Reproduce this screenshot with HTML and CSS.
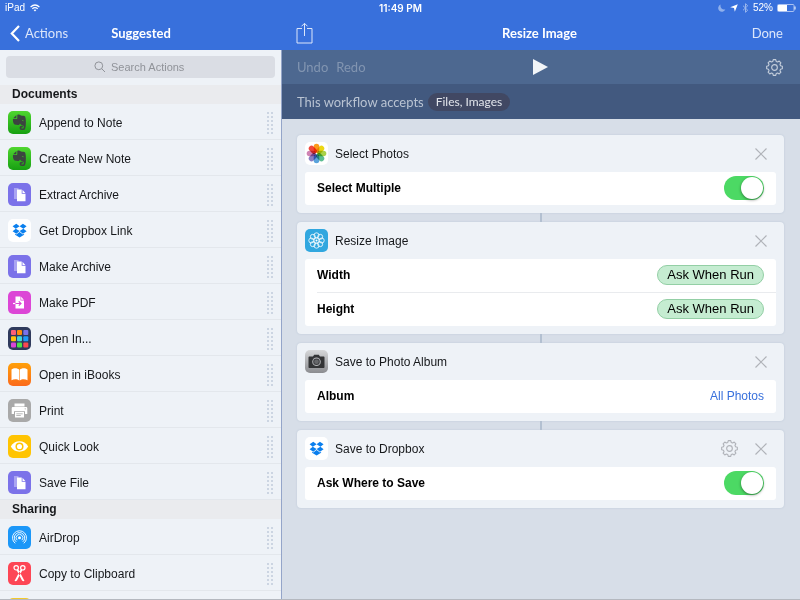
FILE: index.html
```html
<!DOCTYPE html>
<html lang="en">
<head>
<meta charset="utf-8">
<meta name="viewport" content="width=device-width, initial-scale=1">
<title>Resize Image</title>
<link rel="stylesheet" href="styles.css">
</head>
<body>
<svg class="sprite" aria-hidden="true">
  <defs>
    <linearGradient id="g-green" x1="0" y1="0" x2="0" y2="1"><stop offset="0" stop-color="#4fd62f"/><stop offset="1" stop-color="#17a012"/></linearGradient>
    <linearGradient id="g-orange" x1="0" y1="0" x2="0" y2="1"><stop offset="0" stop-color="#ffa009"/><stop offset="1" stop-color="#fb6a1c"/></linearGradient>
    <linearGradient id="g-gray" x1="0" y1="0" x2="0" y2="1"><stop offset="0" stop-color="#d6d7d9"/><stop offset="1" stop-color="#8b8c90"/></linearGradient>
  </defs>
  <symbol id="evernote" viewBox="0 0 23 23">
    <rect width="23" height="23" rx="5" fill="url(#g-green)"/>
    <path d="M5.200 7.200 8.400 4v2.400c0 .5-.3.8-.8.8z" fill="#3c4440"/>
    <path d="M5 8h3.300c.6 0 1-.4 1-1V3.900c.5-.5 2.600-.6 3.600.5 1.500.2 3.600.3 4.200 1 .7 1.400 1 5.300.7 8.500-.2 2.600-.7 5.100-2.300 5.100h-1.700c-1.400 0-2.200-.8-2.200-2.200 0-1.300.9-2 2.200-2h1v1.400h-.7c-.6 0-.8.3-.8.7 0 .5.3.7.8.7h.9c.6 0 .8-1 .8-2.200-.2-1-.9-1.200-2.300-1.500-.8-.2-1.300-.6-1.500-1.300-.2.9-.8 1.500-2 1.500-3.200 0-4.300-.7-4.700-2.500C5 10.500 4.800 9 5 8z" fill="#3c4440"/>
    <path d="M13.800 10c.2-1.200 1.800-1.100 2 .3-.7-.3-1.300-.3-2-.3z" fill="#45c128"/>
  </symbol>
  <symbol id="files" viewBox="0 0 23 23">
    <rect width="23" height="23" rx="5" fill="#7b72e9"/>
    <path d="M6 5h4.500v11H6z" fill="#aaa4f2"/>
    <path d="M9 6.500h4.700V10.800H17.500v7.500H9z" fill="#fff"/>
    <path d="M14.500 6.800 17.300 10h-2.800z" fill="#fff"/>
  </symbol>
  <symbol id="dropbox" viewBox="0 0 23 23">
    <rect width="23" height="23" rx="5" fill="#fff"/>
    <path d="M8.300 4.700 11.600 7.300 7.800 9.700 4.600 7.200zM14.900 4.700 18.600 7.200 15.400 9.700 11.600 7.300zM4.600 12.200 7.800 9.700 11.600 12.100 8.300 14.700zM18.600 12.200 15.400 9.700 11.600 12.100 14.900 14.700zM11.600 12.900 14.900 15.500 16.100 14.800V15.700L11.600 18.400 7.100 15.700V14.800L8.300 15.500z" fill="#0a7fee"/>
  </symbol>
  <symbol id="pdf" viewBox="0 0 23 23">
    <rect width="23" height="23" rx="5" fill="#dc46d6"/>
    <path d="M7.500 5.500h5v4H16V17.500H7.500z" fill="#fff"/>
    <path d="M13.200 5.700 15.800 8.700h-2.600z" fill="#fff"/>
    <path d="M5 12.500h2.500" stroke="#fff" stroke-width="1.200"/>
    <path d="M7.500 12.500h5M10.800 10.300 13 12.500l-2.200 2.200" fill="none" stroke="#dc46d6" stroke-width="1.200"/>
  </symbol>
  <symbol id="grid" viewBox="0 0 23 23">
    <rect width="23" height="23" rx="5" fill="#2f3a5c"/>
    <g><rect x="3" y="3" width="5" height="5" rx="1" fill="#fb5f78"/><rect x="9" y="3" width="5" height="5" rx="1" fill="#ff8a08"/><rect x="15.300" y="3" width="5" height="5" rx="1" fill="#7b72e9"/>
    <rect x="3" y="9.300" width="5" height="5" rx="1" fill="#ffc20a"/><rect x="9" y="9.300" width="5" height="5" rx="1" fill="#45d5d8"/><rect x="15.300" y="9.300" width="5" height="5" rx="1" fill="#1d9bfa"/>
    <rect x="3" y="15.500" width="5" height="5" rx="1" fill="#dc46d6"/><rect x="9" y="15.500" width="5" height="5" rx="1" fill="#4be14a"/><rect x="15.300" y="15.500" width="5" height="5" rx="1" fill="#fd4650"/></g>
  </symbol>
  <symbol id="books" viewBox="0 0 23 23">
    <rect width="23" height="23" rx="5" fill="url(#g-orange)"/>
    <path d="M3.500 6.500C5.500 4.700 9.500 4.700 11.200 6.700V17.500C9.500 15.800 5.800 15.700 3.500 17.300zM19.500 6.500C17.500 4.700 13.500 4.700 11.800 6.700V17.500C13.500 15.800 17.200 15.700 19.500 17.300z" fill="#fff"/>
  </symbol>
  <symbol id="print" viewBox="0 0 23 23">
    <rect width="23" height="23" rx="5" fill="#a9a9a9"/>
    <path d="M6.500 4.500h10v3h-10z" fill="#fff"/>
    <path d="M5 8h13c.8 0 1.300.5 1.300 1.300V15H17v-2.800H6V15H3.700V9.300C3.700 8.500 4.200 8 5 8z" fill="#fff"/>
    <path d="M7 13h9v5.500H7z" fill="#fff"/>
    <path d="M8.300 14.800h6.400M8.300 16.500h4.500" stroke="#a9a9a9" stroke-width=".8"/>
    <circle cx="17.200" cy="9.800" r=".6" fill="#a9a9a9"/>
  </symbol>
  <symbol id="eye" viewBox="0 0 23 23">
    <rect width="23" height="23" rx="5" fill="#ffc402"/>
    <path d="M2.800 11.500C6.500 4.600 16.500 4.600 20.200 11.500 16.500 18.400 6.500 18.400 2.800 11.500z" fill="#fff"/>
    <circle cx="11.500" cy="11.500" r="3.300" fill="none" stroke="#ffc402" stroke-width="1.500"/>
  </symbol>
  <symbol id="airdrop" viewBox="0 0 23 23">
    <rect width="23" height="23" rx="5" fill="#1b97f8"/>
    <g fill="none" stroke="#fff" stroke-width=".9">
      <path d="M7.200 17.300A7 7 0 1 1 15.800 17.300"/>
      <path d="M8.200 15.800A5.200 5.200 0 1 1 14.800 15.800"/>
      <path d="M9.100 14.200A3.400 3.400 0 1 1 13.900 14.200"/>
    </g>
    <path d="M11.500 12.500 8 18.300C10 19.100 13 19.100 15 18.300z" fill="#1b97f8"/>
    <circle cx="11.500" cy="11.700" r="1.500" fill="#fff"/>
  </symbol>
  <symbol id="scissors" viewBox="0 0 23 23">
    <rect width="23" height="23" rx="5" fill="#fd4655"/>
    <g fill="none" stroke="#fff" stroke-width="1.200"><circle cx="8.200" cy="5.800" r="2.200"/><circle cx="14.800" cy="5.800" r="2.200"/></g>
    <path d="M8.500 8 10.300 7.300 16.500 19C15 19.500 14 18.800 13.500 17.500zM14.500 8 12.700 7.300 6.500 19C8 19.500 9 18.800 9.500 17.500z" fill="#fff"/>
    <circle cx="11.500" cy="11.200" r=".6" fill="#fd4655"/>
  </symbol>
  <symbol id="yellow" viewBox="0 0 23 23"><rect width="23" height="23" rx="5" fill="#f2c92b"/></symbol>
  <symbol id="photos" viewBox="0 0 23 23">
    <rect width="23" height="23" rx="5" fill="#fff"/>
    <g class="petals">
      <rect x="8.700" y="1.700" width="5.600" height="9" rx="2.800" fill="#fb9a1b"/>
      <rect x="8.700" y="1.700" width="5.600" height="9" rx="2.800" fill="#ecd713" transform="rotate(45 11.500 11.500)"/>
      <rect x="8.700" y="1.700" width="5.600" height="9" rx="2.800" fill="#a9d149" transform="rotate(90 11.500 11.500)"/>
      <rect x="8.700" y="1.700" width="5.600" height="9" rx="2.800" fill="#5cbd92" transform="rotate(135 11.500 11.500)"/>
      <rect x="8.700" y="1.700" width="5.600" height="9" rx="2.800" fill="#5aa3dc" transform="rotate(180 11.500 11.500)"/>
      <rect x="8.700" y="1.700" width="5.600" height="9" rx="2.800" fill="#8a7fc4" transform="rotate(225 11.500 11.500)"/>
      <rect x="8.700" y="1.700" width="5.600" height="9" rx="2.800" fill="#cf83b4" transform="rotate(270 11.500 11.500)"/>
      <rect x="8.700" y="1.700" width="5.600" height="9" rx="2.800" fill="#f0493d" transform="rotate(315 11.500 11.500)"/>
    </g>
  </symbol>
  <symbol id="flower" viewBox="0 0 23 23">
    <rect width="23" height="23" rx="5" fill="#31a7df"/>
    <g fill="none" stroke="#fff" stroke-width=".8">
      <circle cx="11.500" cy="6.300" r="2.500"/><circle cx="15.200" cy="7.800" r="2.500"/><circle cx="16.700" cy="11.500" r="2.500"/><circle cx="15.200" cy="15.200" r="2.500"/><circle cx="11.500" cy="16.700" r="2.500"/><circle cx="7.800" cy="15.200" r="2.500"/><circle cx="6.300" cy="11.500" r="2.500"/><circle cx="7.800" cy="7.800" r="2.500"/><circle cx="11.500" cy="11.500" r="2.600"/>
    </g>
    <circle cx="11.500" cy="11.500" r="1" fill="#fff"/>
  </symbol>
  <symbol id="camera" viewBox="0 0 23 23">
    <rect width="23" height="23" rx="5" fill="url(#g-gray)"/>
    <path d="M4.500 6.500H8L9.200 4.800h4.600L15 6.500h3.500c.6 0 1 .4 1 1V17c0 .6-.4 1-1 1h-14c-.6 0-1-.4-1-1V7.500c0-.6.400-1 1-1z" fill="#333436"/>
    <circle cx="11.500" cy="11.800" r="4.300" fill="#b4b5b8"/><circle cx="11.500" cy="11.800" r="3.300" fill="#3c3d40"/><circle cx="11.500" cy="11.800" r="2.300" fill="#66676a"/>
  </symbol>
  <symbol id="gear" viewBox="0 0 18 18">
    <path d="M7.700 1.300h2.600l.5 1.900 1.500.6 1.700-1 1.800 1.800-1 1.700.6 1.500 1.900.5v2.600l-1.900.5-.6 1.500 1 1.700-1.800 1.800-1.700-1-1.500.6-.5 1.900H7.700l-.5-1.900-1.500-.6-1.700 1-1.800-1.800 1-1.700-.6-1.500-1.900-.5V8.300l1.900-.5.6-1.500-1-1.700L4 2.800l1.700 1 1.500-.6z" transform="translate(0 -.6)" fill="none" stroke="currentColor" stroke-width="1.200" stroke-linejoin="round"/>
    <circle cx="9" cy="9" r="3" fill="none" stroke="currentColor" stroke-width="1.200"/>
  </symbol>
  <symbol id="close" viewBox="0 0 12 12"><path d="M.5.5l11 11M11.500.5l-11 11" stroke="currentColor" stroke-width="1.200" fill="none"/></symbol>
</svg>

<header class="status">
  <div class="status-side">
    <span>iPad</span>
    <svg width="10" height="8" viewBox="0 0 10 8" aria-hidden="true"><path d="M.6 3Q5-1 9.400 3M2.300 4.800Q5 2.300 7.700 4.800" fill="none" stroke="#fff" stroke-width="1.200"/><path d="M3.600 6Q5 4.900 6.400 6L5 7.600z" fill="#fff"/></svg>
  </div>
  <strong class="clock">11:49 PM</strong>
  <div class="status-side status-right">
    <svg width="8" height="8" viewBox="0 0 8 8" aria-hidden="true"><path d="M2.700.6A3.700 3.700 0 1 0 7.400 5.300 3.700 3.700 0 0 1 2.700.6z" fill="#8fb0ec"/></svg>
    <svg width="8" height="8" viewBox="0 0 8 8" aria-hidden="true"><path d="M7.800.2 4.800 7.800 4 4 .2 3.200z" fill="#fff"/></svg>
    <svg width="7" height="10" viewBox="0 0 7 10" aria-hidden="true"><path d="M1 2.700 5.700 7.200 3.500 9.300V.7L5.700 2.800 1 7.300" fill="none" stroke="#9ab7ee"/></svg>
    <span>52%</span>
    <svg width="19" height="8" viewBox="0 0 19 8" aria-hidden="true"><rect x=".5" y=".5" width="16.500" height="7" rx="1" fill="none" stroke="#a9c1f1"/><path d="M1 1h9v6H1z" fill="#fff"/><path d="M18 2.500v3" stroke="#fff"/></svg>
  </div>
</header>

<div class="app">
  <aside class="sidebar">
    <nav class="nav">
      <button class="nav-button back" type="button"><svg width="10" height="17" viewBox="0 0 10 17" aria-hidden="true"><path d="M9 1 1.800 8.500 9 16" fill="none" stroke="#fff" stroke-width="2.200"/></svg>Actions</button>
      <h2 class="nav-title">Suggested</h2>
    </nav>
    <div class="search">
      <label class="search-box">
        <svg width="12" height="12" viewBox="0 0 12 12" aria-hidden="true"><circle cx="4.800" cy="4.800" r="3.900" fill="none" stroke="#909399"/><path d="M7.600 7.600 11 11" stroke="#909399"/></svg>
        <input type="search" placeholder="Search Actions" aria-label="Search Actions">
      </label>
    </div>
    <div class="list">
      <h3 class="section">Documents</h3>
      <ul class="rows">
        <li class="row"><svg class="icon"><use href="#evernote"/></svg><span>Append to Note</span><i class="grip"></i></li>
        <li class="row"><svg class="icon"><use href="#evernote"/></svg><span>Create New Note</span><i class="grip"></i></li>
        <li class="row"><svg class="icon"><use href="#files"/></svg><span>Extract Archive</span><i class="grip"></i></li>
        <li class="row"><svg class="icon"><use href="#dropbox"/></svg><span>Get Dropbox Link</span><i class="grip"></i></li>
        <li class="row"><svg class="icon"><use href="#files"/></svg><span>Make Archive</span><i class="grip"></i></li>
        <li class="row"><svg class="icon"><use href="#pdf"/></svg><span>Make PDF</span><i class="grip"></i></li>
        <li class="row"><svg class="icon"><use href="#grid"/></svg><span>Open In...</span><i class="grip"></i></li>
        <li class="row"><svg class="icon"><use href="#books"/></svg><span>Open in iBooks</span><i class="grip"></i></li>
        <li class="row"><svg class="icon"><use href="#print"/></svg><span>Print</span><i class="grip"></i></li>
        <li class="row"><svg class="icon"><use href="#eye"/></svg><span>Quick Look</span><i class="grip"></i></li>
        <li class="row"><svg class="icon"><use href="#files"/></svg><span>Save File</span><i class="grip"></i></li>
      </ul>
      <h3 class="section">Sharing</h3>
      <ul class="rows">
        <li class="row"><svg class="icon"><use href="#airdrop"/></svg><span>AirDrop</span><i class="grip"></i></li>
        <li class="row"><svg class="icon"><use href="#scissors"/></svg><span>Copy to Clipboard</span><i class="grip"></i></li>
        <li class="row"><svg class="icon"><use href="#yellow"/></svg><i class="grip"></i></li>
      </ul>
    </div>
  </aside>

  <main class="editor">
    <nav class="nav nav-main">
      <button class="nav-button" type="button" aria-label="Share"><svg width="17" height="22" viewBox="0 0 17 22" aria-hidden="true"><path d="M6 6.500H1V21H16V6.500H11M8.500 14V1.500M5.500 4.300 8.500 1.300 11.500 4.300" fill="none" stroke="#dce6fa"/></svg></button>
      <h1 class="nav-title">Resize Image</h1>
      <button class="nav-button" type="button">Done</button>
    </nav>
    <div class="toolbar">
      <div class="history">
        <button type="button" disabled>Undo</button>
        <button type="button" disabled>Redo</button>
      </div>
      <button class="play" type="button" aria-label="Run"><svg width="15" height="16" viewBox="0 0 15 16" aria-hidden="true"><path d="M0 0 15 8 0 16z" fill="#f2f5f8"/></svg></button>
      <button class="settings" type="button" aria-label="Settings"><svg width="17" height="17"><use href="#gear"/></svg></button>
    </div>
    <div class="accepts"><span>This workflow accepts</span><button class="types" type="button">Files, Images</button></div>

    <div class="canvas">
      <section class="card">
        <header class="card-head"><svg class="icon"><use href="#photos"/></svg><h2>Select Photos</h2><button class="tool" type="button" aria-label="Remove"><svg width="12" height="12"><use href="#close"/></svg></button></header>
        <div class="fields">
          <div class="field"><label for="multiple">Select Multiple</label><input class="switch" id="multiple" type="checkbox" role="switch" checked></div>
        </div>
      </section>
      <section class="card">
        <header class="card-head"><svg class="icon"><use href="#flower"/></svg><h2>Resize Image</h2><button class="tool" type="button" aria-label="Remove"><svg width="12" height="12"><use href="#close"/></svg></button></header>
        <div class="fields">
          <div class="field"><span class="name">Width</span><button class="token" type="button">Ask When Run</button></div>
          <div class="field"><span class="name">Height</span><button class="token" type="button">Ask When Run</button></div>
        </div>
      </section>
      <section class="card">
        <header class="card-head"><svg class="icon"><use href="#camera"/></svg><h2>Save to Photo Album</h2><button class="tool" type="button" aria-label="Remove"><svg width="12" height="12"><use href="#close"/></svg></button></header>
        <div class="fields">
          <div class="field"><span class="name">Album</span><button class="value" type="button">All Photos</button></div>
        </div>
      </section>
      <section class="card">
        <header class="card-head"><svg class="icon"><use href="#dropbox"/></svg><h2>Save to Dropbox</h2><button class="tool" type="button" aria-label="Settings"><svg width="17" height="17"><use href="#gear"/></svg></button><button class="tool" type="button" aria-label="Remove"><svg width="12" height="12"><use href="#close"/></svg></button></header>
        <div class="fields">
          <div class="field"><label for="where">Ask Where to Save</label><input class="switch" id="where" type="checkbox" role="switch" checked></div>
        </div>
      </section>
    </div>
  </main>
</div>
</body>
</html>
```

FILE: styles.css
```css
* { box-sizing: border-box; }

body {
  margin: 0;
  height: 100vh;
  overflow: hidden;
  display: flex;
  flex-direction: column;
  border-bottom: 1px solid #b4b8bf;
  background: #d7dee8;
  color: #16181b;
  font: 12px/16px "Liberation Sans", Arial, sans-serif;
}

h1, h2, h3, ul { margin: 0; padding: 0; font-size: inherit; }
ul { list-style: none; }
svg { display: block; flex: none; }

button {
  margin: 0;
  padding: 0;
  border: 0;
  background: none;
  color: inherit;
  font: inherit;
}

.sprite { position: absolute; width: 0; height: 0; }
.petals rect { mix-blend-mode: multiply; }

/* Status bar */
.status {
  flex: none;
  display: grid;
  grid-template-columns: 1fr auto 1fr;
  align-items: center;
  height: 16px;
  padding: 0 4px 0 5px;
  background: #3870dc;
  color: #fff;
  font-size: 10px;
}
.status-side { display: flex; align-items: center; gap: 5px; }
.status-right { justify-content: flex-end; gap: 4px; }
.clock { font-family: Inter, "Liberation Sans", sans-serif; font-weight: 600; }

/* Two panes */
.app {
  flex: 1;
  min-height: 0;
  display: grid;
  grid-template-columns: minmax(240px, 282px) 1fr;
}
.sidebar, .editor { min-width: 0; min-height: 0; display: flex; flex-direction: column; }

.nav {
  flex: none;
  display: grid;
  grid-template-columns: 1fr auto 1fr;
  align-items: center;
  height: 34px;
  padding: 0 10px;
  background: #3870dc;
  color: #fff;
  font: 13px/18px Lato, "Open Sans", sans-serif;
}
.nav-main { padding: 0 17px 0 14px; }
.nav-button { justify-self: start; color: #dce6fa; }
.nav-button:last-child { justify-self: end; }
.back { display: flex; align-items: center; gap: 5px; }
.nav-title { font-weight: 700; }

/* Action list */
.sidebar { background: #eef2f7; }
.search, .list { border-right: 1px solid #94a5c9; }
.search { flex: none; padding: 6px 6px 7px; }
.search-box {
  display: flex;
  align-items: center;
  justify-content: center;
  gap: 5px;
  height: 22px;
  border-radius: 4px;
  background: #dadde4;
}
.search-box input {
  appearance: none;
  width: 76px;
  padding: 0;
  border: 0;
  outline: 0;
  background: none;
  font: 11px/16px "Liberation Sans", Arial, sans-serif;
}
.search-box input::-webkit-search-cancel-button { display: none; }
.search-box input::placeholder { color: #909399; opacity: 1; }

.list { flex: 1; min-height: 0; overflow: hidden; }
.section {
  height: 19px;
  padding: 0 12px;
  background: #eaebee;
  line-height: 19px;
}
.row {
  display: flex;
  align-items: center;
  gap: 8px;
  height: 36px;
  padding: 1px 7px 0 8px;
  box-shadow: inset 0 -1px #e3e7ec;
}
.icon { width: 23px; height: 23px; }
.grip {
  width: 8px;
  height: 24px;
  margin-left: auto;
  background: radial-gradient(circle, #ccd5e2 1px, transparent 1.5px) 0 0 / 4px 4px;
}

/* Editor bars */
.toolbar {
  flex: none;
  display: grid;
  grid-template-columns: 1fr auto 1fr;
  align-items: center;
  height: 34px;
  padding: 0 17px 0 15px;
  background: #4d6890;
  color: #8295b1;
  font: 13px/18px Lato, "Open Sans", sans-serif;
}
.history { display: flex; gap: 8px; }
.settings { justify-self: end; color: #c3cddb; }
.accepts {
  flex: none;
  display: flex;
  align-items: center;
  gap: 4px;
  height: 35px;
  padding: 0 15px;
  background: #42597f;
  color: #b9c3d2;
  font: 13px/18px Lato, "Open Sans", sans-serif;
}
.types {
  padding: 0 8px;
  border-radius: 9px;
  background: #414863;
  color: #e2e5eb;
  font-size: 12px;
}

/* Workflow */
.canvas {
  flex: 1;
  min-height: 0;
  display: flex;
  flex-direction: column;
  gap: 9px;
  padding: 16px 16px 0 15px;
  overflow: hidden;
}
.card {
  flex: none;
  position: relative;
  padding: 0 8px 8px;
  border-radius: 4px;
  background: #eef2f7;
  box-shadow: 0 0 2px #b9c4d4;
}
.card + .card::before {
  content: "";
  position: absolute;
  left: 50%;
  bottom: 100%;
  width: 2px;
  height: 9px;
  margin-left: -1px;
  background: #b3c0d1;
}
.card-head {
  display: flex;
  align-items: center;
  height: 37px;
  padding-right: 9px;
}
.card-head h2 { flex: 1; padding-left: 7px; font-weight: 400; }
.tool { color: #b0b3b9; margin-left: 17px; }
.fields { border-radius: 3px; background: #fff; color: #000; }
.field {
  display: flex;
  align-items: center;
  justify-content: space-between;
  height: 33px;
  margin-left: 12px;
  padding: 0 12px 1px 0;
  font-weight: 700;
}
.field + .field { height: 34px; border-top: 1px solid #e9ebee; }
.value { color: #3870dc; font-weight: 400; }
.token {
  height: 20px;
  padding: 0 9px;
  border: 1px solid #93cfa5;
  border-radius: 10px;
  background: #c5ecd1;
  font-size: 13px;
  font-weight: 400;
  line-height: 18px;
}
.switch {
  appearance: none;
  display: flex;
  justify-content: flex-end;
  width: 40px;
  height: 24px;
  margin: 0;
  padding: 1px;
  border-radius: 12px;
  background: #4cd964;
}
.switch::before {
  content: "";
  width: 22px;
  height: 22px;
  border-radius: 50%;
  background: #fff;
  box-shadow: 0 1px 3px rgba(0, 0, 0, .45);
}
.switch:not(:checked) { justify-content: flex-start; background: #d9dbe0; }
```
